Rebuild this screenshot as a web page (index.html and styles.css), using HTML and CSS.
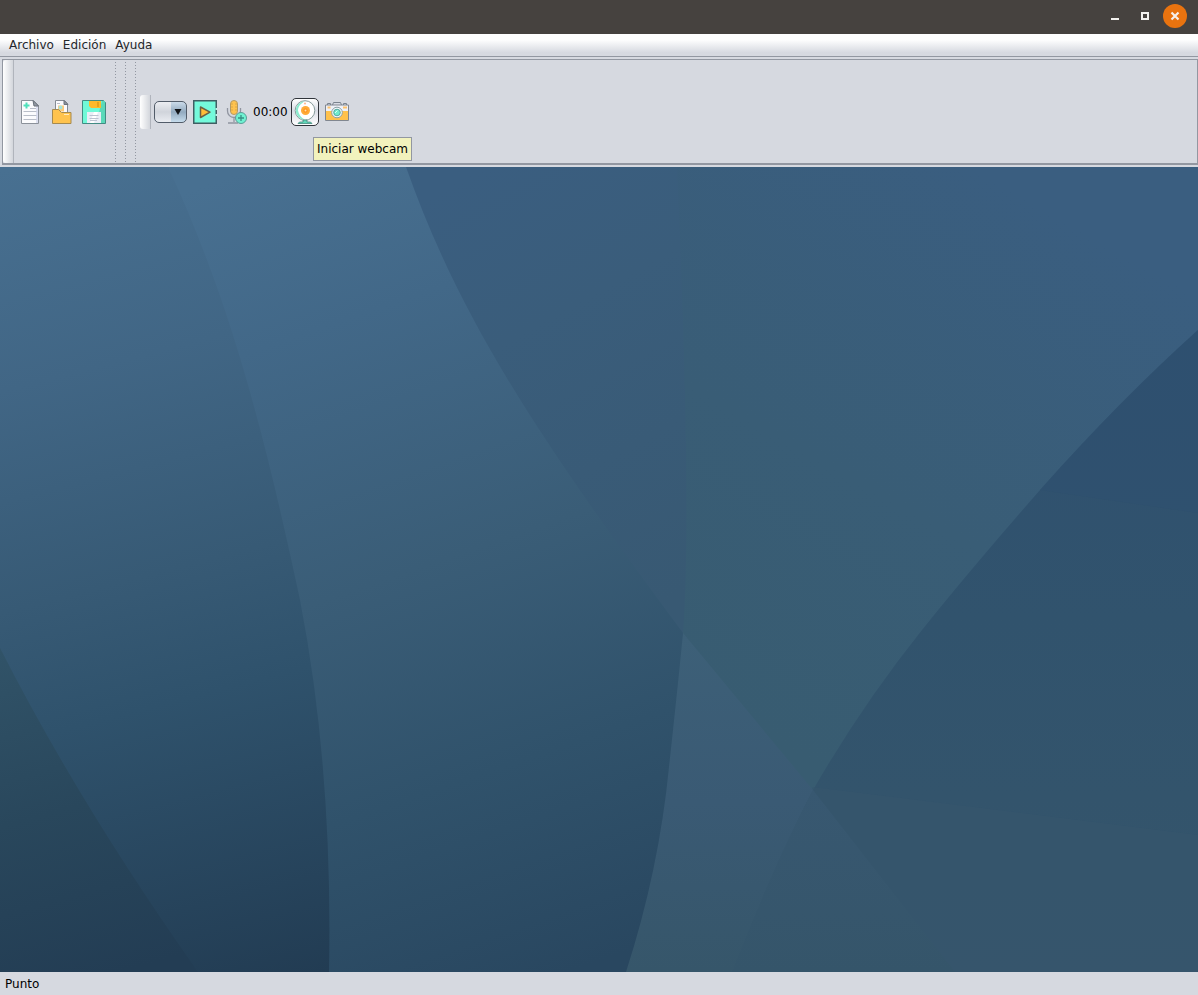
FILE: index.html
```html
<!DOCTYPE html>
<html lang="es">
<head>
<meta charset="utf-8">
<title>Multimedia</title>
<link rel="stylesheet" href="styles.css">
</head>
<body>
<header class="titlebar">
  <button class="win-btn" aria-label="Minimizar"><svg width="10" height="10" viewBox="0 0 10 10"><path d="M1 7h8v2H1z" fill="#f2f1ee"/></svg></button>
  <button class="win-btn" aria-label="Maximizar"><svg width="10" height="10" viewBox="0 0 10 10"><path d="M2 2h6v6H2z" fill="none" stroke="#f2f1ee" stroke-width="2"/></svg></button>
  <button class="win-btn win-close" aria-label="Cerrar"><svg width="10" height="10" viewBox="0 0 10 10"><path d="M1.500 1.500l7 7M8.500 1.500l-7 7" stroke="#f6efe9" stroke-width="2.200"/></svg></button>
</header>
<nav class="menubar">
  <button class="menu">Archivo</button>
  <button class="menu">Edición</button>
  <button class="menu">Ayuda</button>
</nav>
<main class="content">
  <div class="toolbar" role="toolbar">
    <span class="grip"></span>
    <div class="group">
      <button class="tool" aria-label="Nuevo">
        <svg width="24" height="24" viewBox="0 0 24 24"><path d="M3.500.5h12l5 5v18h-17z" fill="#fbfbfd" stroke="#8b919a"/><path d="M18 6h2v17h-2z" fill="#dcdff0"/><path d="M15 .5l5.500 5.500h-4.500z" fill="#9299a4" stroke="#686f79"/><path d="M8.500 2.500v6M5.500 5.500h6" stroke="#4fe0bb" stroke-width="2"/><path d="M12 8.500h6M5.500 11.500h13M5.500 15.500h13M5.500 19.500h13" stroke="#b9bec9"/></svg>
      </button>
      <button class="tool" aria-label="Abrir">
        <svg width="24" height="24" viewBox="0 0 24 24"><path d="M5.500.5h9l3 3v12h-12z" fill="#fafafd" stroke="#858b94"/><path d="M14 .5v4h4z" fill="#8a929c" stroke="#6c737d"/><path d="M7 3.500h3" stroke="#b9bec9"/><path d="M8 5.500h6v6H8z" fill="#ffc977"/><circle cx="10.500" cy="7.500" r="2" fill="#a3e3dc"/><path d="M2.500 9.500h6l3 3h9.500v11h-18.500z" fill="#ffc34e" stroke="#a58a50"/><path d="M14 14.500h5" stroke="#ffe9bf"/></svg>
      </button>
      <button class="tool" aria-label="Guardar">
        <svg width="24" height="24" viewBox="0 0 24 24"><path d="M.5.5h21l2 2v21H.5z" fill="#70f9d7" stroke="#428b83"/><path d="M14 23L20 1h3v22z" fill="#5bd9b9"/><path d="M7 1h12v7H9L7 6z" fill="#ffb92a"/><path d="M15 2h2v5h-2z" fill="#e9a219"/><path d="M5 12h14v11H5z" fill="#e9edf6"/><path d="M12 12h4l-4 11H8z" fill="#fff"/><path d="M7.500 15.500h9M7.500 18.500h9M8 20.500h7" stroke="#bcc2d1"/></svg>
      </button>
    </div>
    <span class="divider"></span>
    <span class="divider"></span>
    <span class="divider"></span>
    <div class="group media">
      <span class="grip grip-small"></span>
      <span class="combo">
        <select aria-label="Lista de reproducción"><option></option></select>
        <svg class="combo-arrow" width="8" height="6" viewBox="0 0 8 6"><path d="M.5 0h7L4 6z" fill="#111418"/></svg>
      </span>
      <button class="tool" aria-label="Reproducir">
        <svg width="24" height="24" viewBox="0 0 24 24"><path d="M.75.75h22.500v22.500H.75z" fill="#74fadb" stroke="#3f5f63" stroke-width="1.500"/><path d="M23.250 8v2M23.250 14v2" stroke="#b4f5e8" stroke-width="1.500"/><path d="M7.500 7v10.500L17 12.200z" fill="#ffbc37" stroke="#6c6045" stroke-width="1.500" stroke-linejoin="round"/></svg>
      </button>
      <button class="tool" aria-label="Grabar">
        <svg width="24" height="24" viewBox="0 0 24 24"><path d="M2.500 8v3a6.500 6.500 0 0 0 13 0V8M9 18v4M3 23h10" fill="none" stroke="#9095a0" stroke-width="1.300"/><rect x="5.500" y=".5" width="7" height="14" rx="3.500" fill="#ffc34e" stroke="#b59a62"/><path d="M6 4h2M10 4h2M6 7h2M10 7h2M6 10h2M10 10h2" stroke="#d9a648"/><circle cx="16" cy="18" r="5.500" fill="#6ff2d2" stroke="#5a9d97"/><path d="M16 15v6M13 18h6" stroke="#388f84" stroke-width="1.300"/></svg>
      </button>
      <span class="time">00:00</span>
      <div class="tip-anchor">
        <button class="tool tool-hover" aria-label="Webcam" aria-describedby="webcam-tip">
          <svg width="24" height="24" viewBox="0 0 24 24"><circle cx="12" cy="10.500" r="9.800" fill="#fff" stroke="#879b9b"/><path d="M12 1.200a9.300 9.300 0 0 0 0 18.600 13 13 0 0 1-7-9.300c0-4 3-7.500 7-9.300z" fill="#8cebcf"/><circle cx="12.500" cy="10.500" r="4.500" fill="#ffab38"/><circle cx="12.500" cy="10.500" r="2.200" fill="#ff941d"/><circle cx="12.500" cy="10.500" r="1" fill="#ffe0a9"/><circle cx="12" cy="3.500" r="1" fill="#ffb58c"/><path d="M10 20h4v2h3.500l1.500 1.500H5L6.500 22H10z" fill="#60d8b8" stroke="#46887e" stroke-width=".8"/></svg>
        </button>
        <span class="tooltip" role="tooltip" id="webcam-tip">Iniciar webcam</span>
      </div>
      <button class="tool" aria-label="Captura">
        <svg width="24" height="24" viewBox="0 0 24 24"><path d="M2.500 5V3.500h3V5M7.500 5l1-2.500h7l1 2.500M18.500 5V3.500h3V5" fill="#d9dce4" stroke="#7a838e"/><path d="M.5 5h23v15.500H.5z" fill="#eff1f8" stroke="#818790"/><path d="M1 11h22v9H1z" fill="#ffc14b"/><path d="M2.500 7.500h3M18 7.500h4" stroke="#ffc36b" stroke-width="2"/><circle cx="12" cy="12.500" r="5.300" fill="#f5f9fc" stroke="#8ca0a4"/><circle cx="12" cy="12.500" r="3.300" fill="#70ebce" stroke="#55aaa0"/><path d="M10 13l2.500-2.500" stroke="#d8fff5"/></svg>
      </button>
    </div>
  </div>
  <section class="desktop" aria-label="Escritorio">
    <svg class="wallpaper" viewBox="0 167 1198 805" preserveAspectRatio="none" aria-hidden="true">
      <defs>
        <linearGradient id="sky" gradientUnits="userSpaceOnUse" x1="460" y1="180" x2="684" y2="590"><stop offset="0" stop-color="#3a5e80"/><stop offset=".35" stop-color="#3a5d7b"/><stop offset="1" stop-color="#385973"/></linearGradient>
        <linearGradient id="east" gradientUnits="userSpaceOnUse" x1="700" y1="700" x2="994" y2="180"><stop offset="0" stop-color="#385c71"/><stop offset=".45" stop-color="#395d76"/><stop offset="1" stop-color="#3a5e80"/></linearGradient>
        <linearGradient id="left" gradientUnits="userSpaceOnUse" x1="60" y1="155" x2="275" y2="985"><stop offset="0" stop-color="#487091"/><stop offset=".25" stop-color="#416685"/><stop offset=".5" stop-color="#375a75"/><stop offset=".65" stop-color="#2f526c"/><stop offset="1" stop-color="#223c53"/></linearGradient>
        <linearGradient id="middle" gradientUnits="userSpaceOnUse" x1="250" y1="170" x2="530" y2="985"><stop offset="0" stop-color="#487091"/><stop offset=".2" stop-color="#426888"/><stop offset=".5" stop-color="#3a5d77"/><stop offset=".75" stop-color="#30526b"/><stop offset="1" stop-color="#294760"/></linearGradient>
        <linearGradient id="corner" gradientUnits="userSpaceOnUse" x1="0" y1="650" x2="90" y2="980"><stop offset="0" stop-color="#315368"/><stop offset=".5" stop-color="#29475c"/><stop offset="1" stop-color="#233d54"/></linearGradient>
        <linearGradient id="dark" x1="0" y1="0" x2="0" y2="1"><stop offset="0" stop-color="#2f5070"/><stop offset=".45" stop-color="#31536d"/><stop offset="1" stop-color="#35556b"/></linearGradient>
        <linearGradient id="wedge" x1="0" y1="0" x2="0" y2="1"><stop offset="0" stop-color="#3d6078"/><stop offset=".5" stop-color="#3a5a74"/><stop offset="1" stop-color="#36566a"/></linearGradient>
        <linearGradient id="floor" x1="0" y1="0" x2="0" y2="1"><stop offset="0" stop-color="#385871"/><stop offset="1" stop-color="#35556a"/></linearGradient>
      </defs>
      <path d="M0 167h1198v805H0z" fill="url(#sky)"/>
      <path d="M677 167h521v805H690l-7-339Q692 510 677 167z" fill="url(#east)"/>
      <path d="M1198 330Q1120 400 1040 490Q970 570 922 630Q862 705 813 790Q775 857 730 972H1198z" fill="url(#dark)"/>
      <path d="M1040 490L1198 513V330Q1120 400 1040 490z" fill="#2e506f" opacity=".5"/>
      <path d="M813 787L1198 835V972H730Q775 857 813 787z" fill="#37566e" opacity=".55"/>
      <path d="M683 633L813 790Q777 857 740 972H620z" fill="url(#wedge)"/>
      <path d="M813 790L955 972H732Q777 857 813 790z" fill="url(#floor)"/>
      <path d="M168 167H406C460 320 540 440 683 633Q678 685 669 767Q659 870 626 972H320z" fill="url(#middle)"/>
      <path d="M0 167H168C235 310 270 460 300 600Q333 770 329 972H0z" fill="url(#left)"/>
      <path d="M0 648Q80 805 198 972H0z" fill="url(#corner)"/>
    </svg>
  </section>
</main>
<footer class="statusbar">Punto</footer>
</body>
</html>
```

FILE: styles.css
```css
* { box-sizing: border-box; }

body {
  margin: 0;
  min-height: 100vh;
  display: flex;
  flex-direction: column;
  background: #d6d9e0;
  color: #000;
  font: 12px/16px "DejaVu Sans", sans-serif;
}

button {
  margin: 0;
  padding: 0;
  border: 0;
  background: none;
  color: inherit;
  font: inherit;
}

svg { display: block; }

.titlebar {
  height: 34px;
  display: flex;
  justify-content: flex-end;
  align-items: center;
  gap: 6px;
  padding: 0 11px 2px 0;
  background: #46423f;
}

.win-btn {
  width: 24px;
  height: 24px;
  border-radius: 50%;
  display: grid;
  place-items: center;
}

.win-close { background: #e9730f; }

.menubar {
  height: 23px;
  display: flex;
  align-items: center;
  gap: 9px;
  padding: 0 9px;
  background: linear-gradient(#fff 25%, #d6d9e0 85%);
  border-bottom: 1px solid #9297a1;
  color: #23262b;
}

.content {
  flex: 1;
  display: flex;
  flex-direction: column;
  padding-top: 2px;
}

.toolbar {
  height: 106px;
  display: flex;
  align-items: stretch;
  margin: 0 0 2px 2px;
  border: 1px solid #9297a1;
  border-bottom-width: 2px;
}

.grip {
  width: 11px;
  border-right: 1px solid #b0b4bc;
  border-radius: 3px 0 0 3px;
  background: linear-gradient(90deg, #fff, #d3d6dc);
}

.grip-small {
  height: 34px;
  margin-right: 3px;
}

.group {
  display: flex;
  align-items: center;
}

.group:not(.media) { margin-right: 5px; }

.tool {
  width: 32px;
  height: 28px;
  display: grid;
  place-items: center;
}

.tool-hover {
  width: 28px;
  border: 1px solid #30343a;
  border-radius: 5px;
  background: linear-gradient(#fff, #d9dce5 45%, #fff);
}

.divider {
  width: 1px;
  margin: 2px 9px 1px 0;
  background: repeating-linear-gradient(#9297a1 0 1px, transparent 1px 3px);
}

.divider:nth-last-child(2) { margin-right: 4px; }

.combo {
  position: relative;
  margin-right: 2px;
}

.combo select {
  display: block;
  width: 33px;
  height: 22px;
  appearance: none;
  border: 1px solid #525c69;
  border-radius: 5px;
  background: linear-gradient(#eceef2, #d0d4db 50%, #e9ecf1) 0 0 / 16px 100% no-repeat, linear-gradient(#cbdbea, #92aabf 50%, #c6dcec);
}

.combo-arrow {
  position: absolute;
  right: 5px;
  top: 8px;
  pointer-events: none;
}

.time { width: 38px; }

.tip-anchor {
  position: relative;
  margin-right: 2px;
}

.tooltip {
  position: absolute;
  left: 22px;
  top: 39px;
  padding: 3px;
  border: 1px solid #9297a1;
  background: #f2f2bd;
  white-space: nowrap;
}

.desktop {
  flex: 1;
  display: grid;
  min-height: 200px;
}

.wallpaper {
  width: 100%;
  height: 100%;
  min-height: 0;
}

.statusbar {
  padding: 4px 5px 3px;
}
```
